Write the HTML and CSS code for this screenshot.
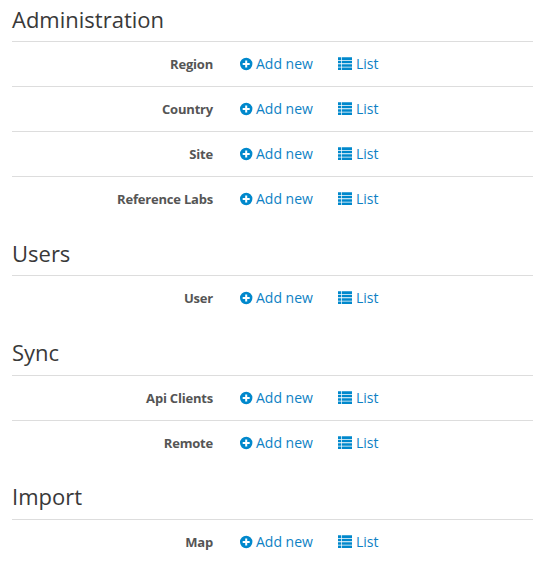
FILE: index.html
```html
<!DOCTYPE html>
<html lang="en">
<head>
<meta charset="utf-8">
<title>Administration</title>
<link rel="stylesheet" href="styles.css">
</head>
<body>
<svg width="0" height="0" class="defs">
<symbol id="plus" viewBox="0 0 14 14"><path fill-rule="evenodd" d="M6.200 .8a6.200 6.200 0 1 1 0 12.400A6.200 6.200 0 0 1 6.200 .8zM5.200 3.500V6H2.700v2h2.500v2.500h2V8h2.500V6H7.200V3.500z"/></symbol>
<symbol id="list" viewBox="0 0 14 14"><path d="M0 .3h3v2.700H0zM3.700 .3H14v2.700H3.700zM0 3.800h3v2.500H0zM3.700 3.800H14v2.500H3.700zM0 7.200h3v2.500H0zM3.700 7.200H14v2.500H3.700zM0 10.600h3v2.400H0zM3.700 10.600H14v2.400H3.700z"/></symbol>
</svg>
<main>
<section>
<h2>Administration</h2>
<div class="row"><b>Region</b><a class="add"><svg><use href="#plus"/></svg>Add new</a><a><svg><use href="#list"/></svg>List</a></div>
<div class="row"><b>Country</b><a class="add"><svg><use href="#plus"/></svg>Add new</a><a><svg><use href="#list"/></svg>List</a></div>
<div class="row"><b>Site</b><a class="add"><svg><use href="#plus"/></svg>Add new</a><a><svg><use href="#list"/></svg>List</a></div>
<div class="row"><b>Reference Labs</b><a class="add"><svg><use href="#plus"/></svg>Add new</a><a><svg><use href="#list"/></svg>List</a></div>
</section>
<section>
<h2>Users</h2>
<div class="row"><b>User</b><a class="add"><svg><use href="#plus"/></svg>Add new</a><a><svg><use href="#list"/></svg>List</a></div>
</section>
<section>
<h2>Sync</h2>
<div class="row"><b>Api Clients</b><a class="add"><svg><use href="#plus"/></svg>Add new</a><a><svg><use href="#list"/></svg>List</a></div>
<div class="row"><b>Remote</b><a class="add"><svg><use href="#plus"/></svg>Add new</a><a><svg><use href="#list"/></svg>List</a></div>
</section>
<section>
<h2>Import</h2>
<div class="row"><b>Map</b><a class="add"><svg><use href="#plus"/></svg>Add new</a><a><svg><use href="#list"/></svg>List</a></div>
</section>
</main>
</body>
</html>
```
FILE: styles.css
```css
body {
  margin: 0;
  background: #fff;
  font: 14px/20px "Open Sans", sans-serif;
  overflow: hidden;
}
.defs { display: block; }
main { padding: 0 15px 0 12px; }
section { padding-bottom: 20px; }
h2 {
  margin: 0;
  height: 35px;
  padding-top: 6px;
  font-size: 22px;
  line-height: 26px;
  font-weight: 400;
  color: #393939;
}
section + section h2 {
  height: 34.4px;
  padding-top: 0;
  line-height: 24px;
}
section:last-child h2 { line-height: 23.2px; }
.row {
  display: grid;
  grid-template-columns: 201px 71px 1fr;
  column-gap: 27px;
  height: 44px;
  align-items: center;
  border-top: 1px solid #ddd;
}
.row b {
  text-align: right;
  font-size: 13px;
  font-weight: 700;
  letter-spacing: -0.2px;
  color: #555;
}
a {
  display: flex;
  align-items: center;
  gap: 4px;
  color: #0d81c4;
  white-space: nowrap;
}
.add { gap: 2px; }
a svg { width: 14px; height: 14px; fill: #0088cc; flex: none; }
```
